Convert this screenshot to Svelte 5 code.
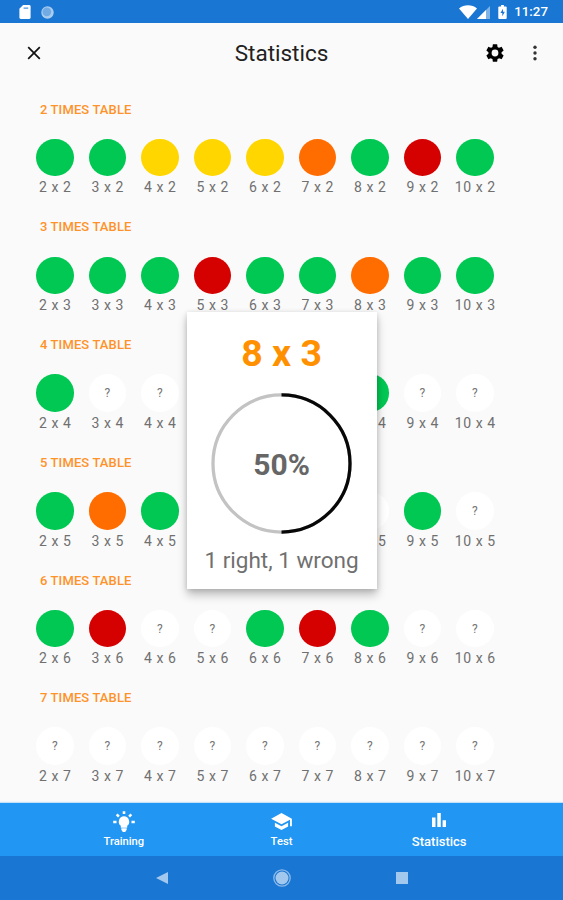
<script lang="ts">
	type Result = 'good' | 'fair' | 'weak' | 'bad' | 'unknown';

	const codes: Record<string, Result> = { g: 'good', y: 'fair', o: 'weak', r: 'bad', '?': 'unknown' };

	const tables = [
		{ number: 2, results: 'ggyyyogrg' },
		{ number: 3, results: 'gggrggogg' },
		{ number: 4, results: 'g?????g??' },
		{ number: 5, results: 'gog????g?' },
		{ number: 6, results: 'gr??grg??' },
		{ number: 7, results: '?????????' }
	];

	let activeTab = $state('Statistics');
	let selected = $state({ label: '8 x 3', right: 1, wrong: 1 });
	let percent = $derived(Math.round((selected.right / (selected.right + selected.wrong)) * 100));
</script>

<div class="screen">
	<div class="status-bar">
		<svg class="sd" viewBox="0 0 12 15"><path d="M4 0h6.500A1.500 1.500 0 0 1 12 1.500v12a1.500 1.500 0 0 1-1.500 1.500h-9A1.500 1.500 0 0 1 0 13.500V4z" /><path d="M4.500 2.500h5v1.800h-5z" fill="#75aee5" /></svg>
		<svg class="sync" viewBox="0 0 14 14"><circle cx="7" cy="7" r="6.700" fill="#a9ccef" /><circle cx="6.300" cy="6.300" r="4.700" fill="#72aae3" /></svg>
		<span class="spacer"></span>
		<svg class="wifi" viewBox="0 0 18 14"><path d="M0 3.400C5-.9 13-.9 18 3.400L9 14z" /></svg>
		<svg class="signal" viewBox="0 0 13 13"><path d="M13 0v13H0z" opacity=".45" /><path d="M9 4v9H0z" /></svg>
		<svg class="battery" viewBox="0 0 9 15"><path d="M3 0h3v1.500h2A1 1 0 0 1 9 2.500V14a1 1 0 0 1-1 1H1a1 1 0 0 1-1-1V2.500a1 1 0 0 1 1-1h2z" /><path d="M5 4 2.300 8.500h2V12l2.700-4.700H5z" fill="#1976d2" /></svg>
		<span class="clock">11:27</span>
	</div>

	<header class="app-bar">
		<button class="icon-btn close" aria-label="Close">
			<svg viewBox="0 0 14 14"><path d="m1.200 1.200 11.600 11.600M12.800 1.200 1.200 12.800" fill="none" stroke="#111" stroke-width="1.700" /></svg>
		</button>
		<h1>Statistics</h1>
		<button class="icon-btn settings" aria-label="Settings">
			<svg viewBox="0 0 24 24"><path d="M19.140 12.940c.04-.3.060-.61.060-.94 0-.32-.020-.64-.070-.94l2.030-1.580c.18-.14.23-.41.120-.61l-1.920-3.320c-.12-.22-.37-.29-.59-.22l-2.390.96c-.5-.38-1.030-.7-1.620-.94l-.36-2.540c-.04-.24-.24-.41-.48-.41h-3.840c-.24 0-.43.17-.47.41l-.36 2.540c-.59.24-1.130.57-1.620.94l-2.390-.96c-.22-.08-.47 0-.59.22L2.740 8.870c-.12.21-.08.47.12.61l2.030 1.580c-.05.3-.09.63-.09.94s.02.64.07.94l-2.030 1.580c-.18.14-.23.41-.12.61l1.920 3.320c.12.22.37.29.59.22l2.390-.96c.5.38 1.030.7 1.620.94l.36 2.540c.05.24.24.41.48.41h3.840c.24 0 .44-.17.47-.41l.36-2.540c.59-.24 1.130-.56 1.620-.94l2.390.96c.22.08.47 0 .59-.22l1.920-3.320c.12-.22.07-.47-.12-.61zM12 15.700a3.700 3.700 0 1 1 0-7.400 3.700 3.700 0 0 1 0 7.400z" /></svg>
		</button>
		<button class="icon-btn more" aria-label="More options">
			<svg viewBox="0 0 4 16"><circle cx="2" cy="2.200" r="1.700" /><circle cx="2" cy="8" r="1.700" /><circle cx="2" cy="13.800" r="1.700" /></svg>
		</button>
	</header>

	<main>
		{#each tables as table (table.number)}
			<section>
				<h2>{table.number} TIMES TABLE</h2>
				<div class="row">
					{#each table.results as code, i}
						<div class="cell">
							<div class="dot {codes[code]}">{code === '?' ? '?' : ''}</div>
							<span class="label">{i + 2} x {table.number}</span>
						</div>
					{/each}
				</div>
			</section>
		{/each}
	</main>

	<nav class="tabs">
		<button class:active={activeTab === 'Training'} onclick={() => (activeTab = 'Training')}>
			<svg class="bulb" viewBox="0 0 22 22"><path d="M11 5.200a5.400 5.400 0 0 0-3.200 9.600v2h6.400v-2A5.400 5.400 0 0 0 11 5.200zM8.300 17.200h5.400v1.600l-1.500 2.200H9.800l-1.500-2.200z" /><path d="M9.700.3h2.600v2.800H9.700zM.2 9.800h3.300v2.500H.2zM18.500 9.800h3.300v2.500h-3.300zM2.800 4.300l1.800-1.800 2.200 2.200L5 6.500zM15.200 4.700l2.200-2.200 1.800 1.800L17 6.500z" /></svg>
			<span>Training</span>
		</button>
		<button class:active={activeTab === 'Test'} onclick={() => (activeTab = 'Test')}>
			<svg class="cap" viewBox="0 0 22 18"><path d="M4 10.200v4L11 18l7-3.800v-4L11 14zM11 0 0 6l11 6 9-4.900V14h2V6z" /></svg>
			<span>Test</span>
		</button>
		<button class:active={activeTab === 'Statistics'} onclick={() => (activeTab = 'Statistics')}>
			<svg class="chart" viewBox="0 0 14 14"><path d="M0 4.500h3.500V14H0zM5.300 0h3.500v14H5.300zM10.600 7.300H14V14h-3.400z" /></svg>
			<span>Statistics</span>
		</button>
	</nav>

	<div class="system-nav">
		<svg viewBox="0 0 14 14"><path d="M13 1v12L1 7z" /></svg>
		<svg class="home" viewBox="0 0 18 18"><circle cx="9" cy="9" r="8.200" fill="none" stroke="#8bb9e8" stroke-width="1.300" /><circle cx="9" cy="9" r="6.500" /></svg>
		<svg viewBox="0 0 14 14"><path d="M1 1h12v12H1z" /></svg>
	</div>

	<div class="popup" role="dialog" aria-label={selected.label}>
		<div class="popup-title">{selected.label}</div>
		<div class="gauge">
			<svg viewBox="0 0 142 142">
				<circle cx="71" cy="71" r="69" stroke="#c3c3c3" />
				<circle cx="71" cy="71" r="69" stroke="#080808" pathLength="100" stroke-dasharray="{percent} 100" transform="rotate(-90 71 71)" />
			</svg>
			<strong>{percent}%</strong>
		</div>
		<div class="summary">{selected.right} right, {selected.wrong} wrong</div>
	</div>
</div>

<style>
	:global(body) {
		margin: 0;
	}

	.screen {
		position: relative;
		display: flex;
		flex-direction: column;
		width: 563px;
		height: 900px;
		overflow: hidden;
		background: #fafafa;
		font-family: Roboto, sans-serif;
	}

	button {
		display: flex;
		padding: 0;
		border: none;
		background: none;
		font-family: inherit;
		cursor: pointer;
	}

	svg {
		display: block;
	}

	.status-bar {
		display: flex;
		flex: none;
		align-items: center;
		height: 22.5px;
		box-sizing: border-box;
		padding: 2px 15px 0 19px;
		background: #1976d2;
		color: #fff;
		fill: #fff;
	}

	.sd {
		width: 12px;
		height: 14px;
	}

	.sync {
		width: 13px;
		height: 13px;
		margin-left: 9.5px;
	}

	.spacer {
		flex: 1;
	}

	.wifi {
		width: 18px;
		height: 14px;
	}

	.signal {
		width: 13px;
		height: 13px;
	}

	.battery {
		width: 9px;
		height: 14px;
		margin: 0 7px 0 8px;
	}

	.clock {
		font-size: 13.3px;
		font-weight: 500;
		line-height: 16px;
	}

	.app-bar {
		display: grid;
		flex: none;
		grid-template-columns: 68px 1fr 28px 54px;
		align-items: center;
		height: 61px;
	}

	.app-bar h1 {
		margin: 0;
		padding-left: 14px;
		font-size: 22.5px;
		font-weight: 400;
		line-height: 28px;
		text-align: center;
		color: #212121;
	}

	.icon-btn {
		justify-content: center;
	}

	.close svg {
		width: 14px;
		height: 14px;
	}

	.settings svg {
		width: 22px;
		height: 22px;
	}

	.more svg {
		width: 4px;
		height: 16px;
		margin-right: 2px;
		fill: #333;
	}

	main {
		flex: 1;
		min-height: 0;
		overflow: hidden;
		padding: 18.3px 28.5px 0;
	}

	section {
		height: 117.7px;
	}

	h2 {
		margin: 0 0 21.2px 11.5px;
		font-size: 13px;
		font-weight: 500;
		line-height: 16px;
		letter-spacing: 0.12px;
		color: #ff9228;
	}

	.row {
		display: flex;
	}

	.cell {
		display: flex;
		flex-direction: column;
		align-items: center;
		width: 52.5px;
	}

	.dot {
		width: 37.5px;
		height: 37.5px;
		border-radius: 50%;
		font-size: 12px;
		line-height: 38px;
		text-align: center;
		color: #757575;
	}

	.good {
		background: #00c853;
	}

	.fair {
		background: #ffd600;
	}

	.weak {
		background: #ff6d00;
	}

	.bad {
		background: #d50000;
	}

	.unknown {
		background: #fff;
	}

	.label {
		margin-top: 2px;
		padding-left: 1px;
		font-size: 14px;
		line-height: 18px;
		letter-spacing: 0.6px;
		white-space: nowrap;
		color: #707070;
	}

	.tabs {
		display: flex;
		flex: none;
		justify-content: center;
		height: 52.5px;
		background: #2196f3;
		box-shadow: 0 -1px 1px #c5e1fa;
	}

	.tabs button {
		flex-direction: column;
		align-items: center;
		width: 157.7px;
		height: 52.5px;
		box-sizing: border-box;
		padding-top: 8px;
		fill: #fff;
		color: #fff;
		font-size: 11.2px;
		font-weight: 500;
		line-height: 14px;
	}

	.tabs span {
		margin-top: auto;
		margin-bottom: 7px;
	}

	.tabs .active span {
		margin-bottom: 7px;
		font-size: 13px;
	}

	.bulb {
		width: 22px;
		height: 22px;
	}

	.cap {
		width: 21px;
		height: 17px;
		margin-top: 2px;
	}

	.chart {
		width: 14px;
		height: 14px;
		margin-top: 2px;
	}

	.system-nav {
		display: flex;
		flex: none;
		align-items: center;
		justify-content: center;
		gap: 104px;
		height: 44.5px;
		background: #1976d2;
		fill: #a3c8ed;
	}

	.system-nav svg {
		width: 14px;
		height: 14px;
	}

	.system-nav .home {
		width: 18px;
		height: 18px;
	}

	.popup {
		position: absolute;
		top: 311.5px;
		left: 186.6px;
		display: flex;
		flex-direction: column;
		align-items: center;
		width: 190px;
		height: 277.5px;
		background: #fff;
		box-shadow: 0 6px 9px rgba(0, 0, 0, 0.24), 0 1px 5px rgba(0, 0, 0, 0.14);
	}

	.popup-title {
		margin-top: 19.5px;
		font-size: 37.5px;
		font-weight: 700;
		line-height: 44px;
		color: #ff9100;
	}

	.gauge {
		display: grid;
		place-items: center;
		width: 141px;
		height: 141px;
		margin-top: 18px;
	}

	.gauge svg,
	.gauge strong {
		grid-area: 1 / 1;
	}

	.gauge svg {
		width: 141px;
		height: 141px;
		fill: none;
		stroke-width: 3.3px;
	}

	.gauge strong {
		padding-top: 3px;
		font-size: 30px;
		font-weight: 700;
		line-height: 36px;
		color: #666;
	}

	.summary {
		margin-top: 11.5px;
		font-size: 22.5px;
		line-height: 28px;
		white-space: nowrap;
		color: #707070;
	}
</style>
